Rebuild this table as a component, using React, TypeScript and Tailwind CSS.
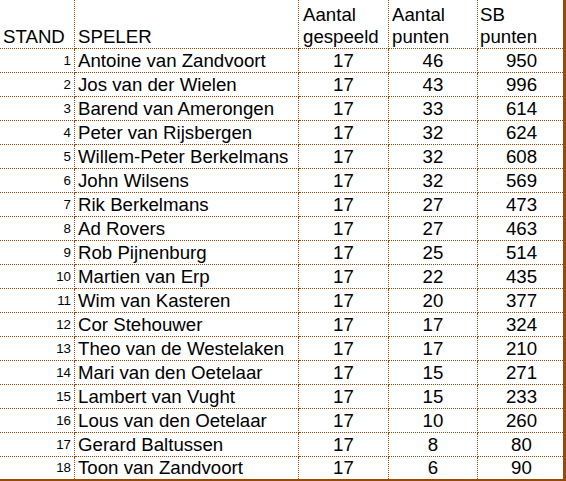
import React from 'react'

interface Speler {
  stand: number
  naam: string
  gespeeld: number
  punten: number
  sb: number
}

const spelers: Speler[] = [
  { stand: 1, naam: 'Antoine van Zandvoort', gespeeld: 17, punten: 46, sb: 950 },
  { stand: 2, naam: 'Jos van der Wielen', gespeeld: 17, punten: 43, sb: 996 },
  { stand: 3, naam: 'Barend van Amerongen', gespeeld: 17, punten: 33, sb: 614 },
  { stand: 4, naam: 'Peter van Rijsbergen', gespeeld: 17, punten: 32, sb: 624 },
  { stand: 5, naam: 'Willem-Peter Berkelmans', gespeeld: 17, punten: 32, sb: 608 },
  { stand: 6, naam: 'John Wilsens', gespeeld: 17, punten: 32, sb: 569 },
  { stand: 7, naam: 'Rik Berkelmans', gespeeld: 17, punten: 27, sb: 473 },
  { stand: 8, naam: 'Ad Rovers', gespeeld: 17, punten: 27, sb: 463 },
  { stand: 9, naam: 'Rob Pijnenburg', gespeeld: 17, punten: 25, sb: 514 },
  { stand: 10, naam: 'Martien van Erp', gespeeld: 17, punten: 22, sb: 435 },
  { stand: 11, naam: 'Wim van Kasteren', gespeeld: 17, punten: 20, sb: 377 },
  { stand: 12, naam: 'Cor Stehouwer', gespeeld: 17, punten: 17, sb: 324 },
  { stand: 13, naam: 'Theo van de Westelaken', gespeeld: 17, punten: 17, sb: 210 },
  { stand: 14, naam: 'Mari van den Oetelaar', gespeeld: 17, punten: 15, sb: 271 },
  { stand: 15, naam: 'Lambert van Vught', gespeeld: 17, punten: 15, sb: 233 },
  { stand: 16, naam: 'Lous van den Oetelaar', gespeeld: 17, punten: 10, sb: 260 },
  { stand: 17, naam: 'Gerard Baltussen', gespeeld: 17, punten: 8, sb: 80 },
  { stand: 18, naam: 'Toon van Zandvoort', gespeeld: 17, punten: 6, sb: 90 }
]

const dot = 'border-dotted border-[#9a4a06]'

function Header() {
  const cell = `flex flex-col justify-end h-[49px] border-b ${dot} leading-[22px]`
  return (
    <>
      <div className={`${cell} border-r pl-[3px]`}>STAND</div>
      <div className={`${cell} border-r pl-[3px]`}>SPELER</div>
      <div className={`${cell} border-r pl-[4px]`}>
        <span>Aantal</span>
        <span>gespeeld</span>
      </div>
      <div className={`${cell} border-r pl-[3px]`}>
        <span>Aantal</span>
        <span>punten</span>
      </div>
      <div className={`${cell} pl-[2px]`}>
        <span>SB</span>
        <span>punten</span>
      </div>
    </>
  )
}

function Rij({ speler, laatste }: { speler: Speler; laatste: boolean }) {
  const row = laatste ? 'h-[22px]' : `h-[24px] border-b ${dot}`
  const cell = `flex items-end ${row} leading-[22px]`
  return (
    <>
      <div
        className={`${cell} border-r ${dot} justify-end pr-[3px] text-[13.33px] leading-[16px]`}
      >
        {speler.stand}
      </div>
      <div className={`${cell} border-r ${dot} pl-[3px] whitespace-nowrap`}>
        {speler.naam}
      </div>
      <div className={`${cell} border-r ${dot} justify-center`}>
        {speler.gespeeld}
      </div>
      <div className={`${cell} border-r ${dot} justify-center`}>
        {speler.punten}
      </div>
      <div className={`${cell} justify-center pl-[2px]`}>{speler.sb}</div>
    </>
  )
}

export default function App() {
  return (
    <div className="w-[566px] h-[481px] bg-white">
      <div className="w-[566px] border-r-[3px] border-b-2 border-[#9a4a06] grid grid-cols-[75px_224px_90px_89px_85px] font-['Liberation_Sans',Arial,sans-serif] text-[18.67px] text-black">
        <Header />
        {spelers.map((s, i) => (
          <Rij key={s.stand} speler={s} laatste={i === spelers.length - 1} />
        ))}
      </div>
    </div>
  )
}
